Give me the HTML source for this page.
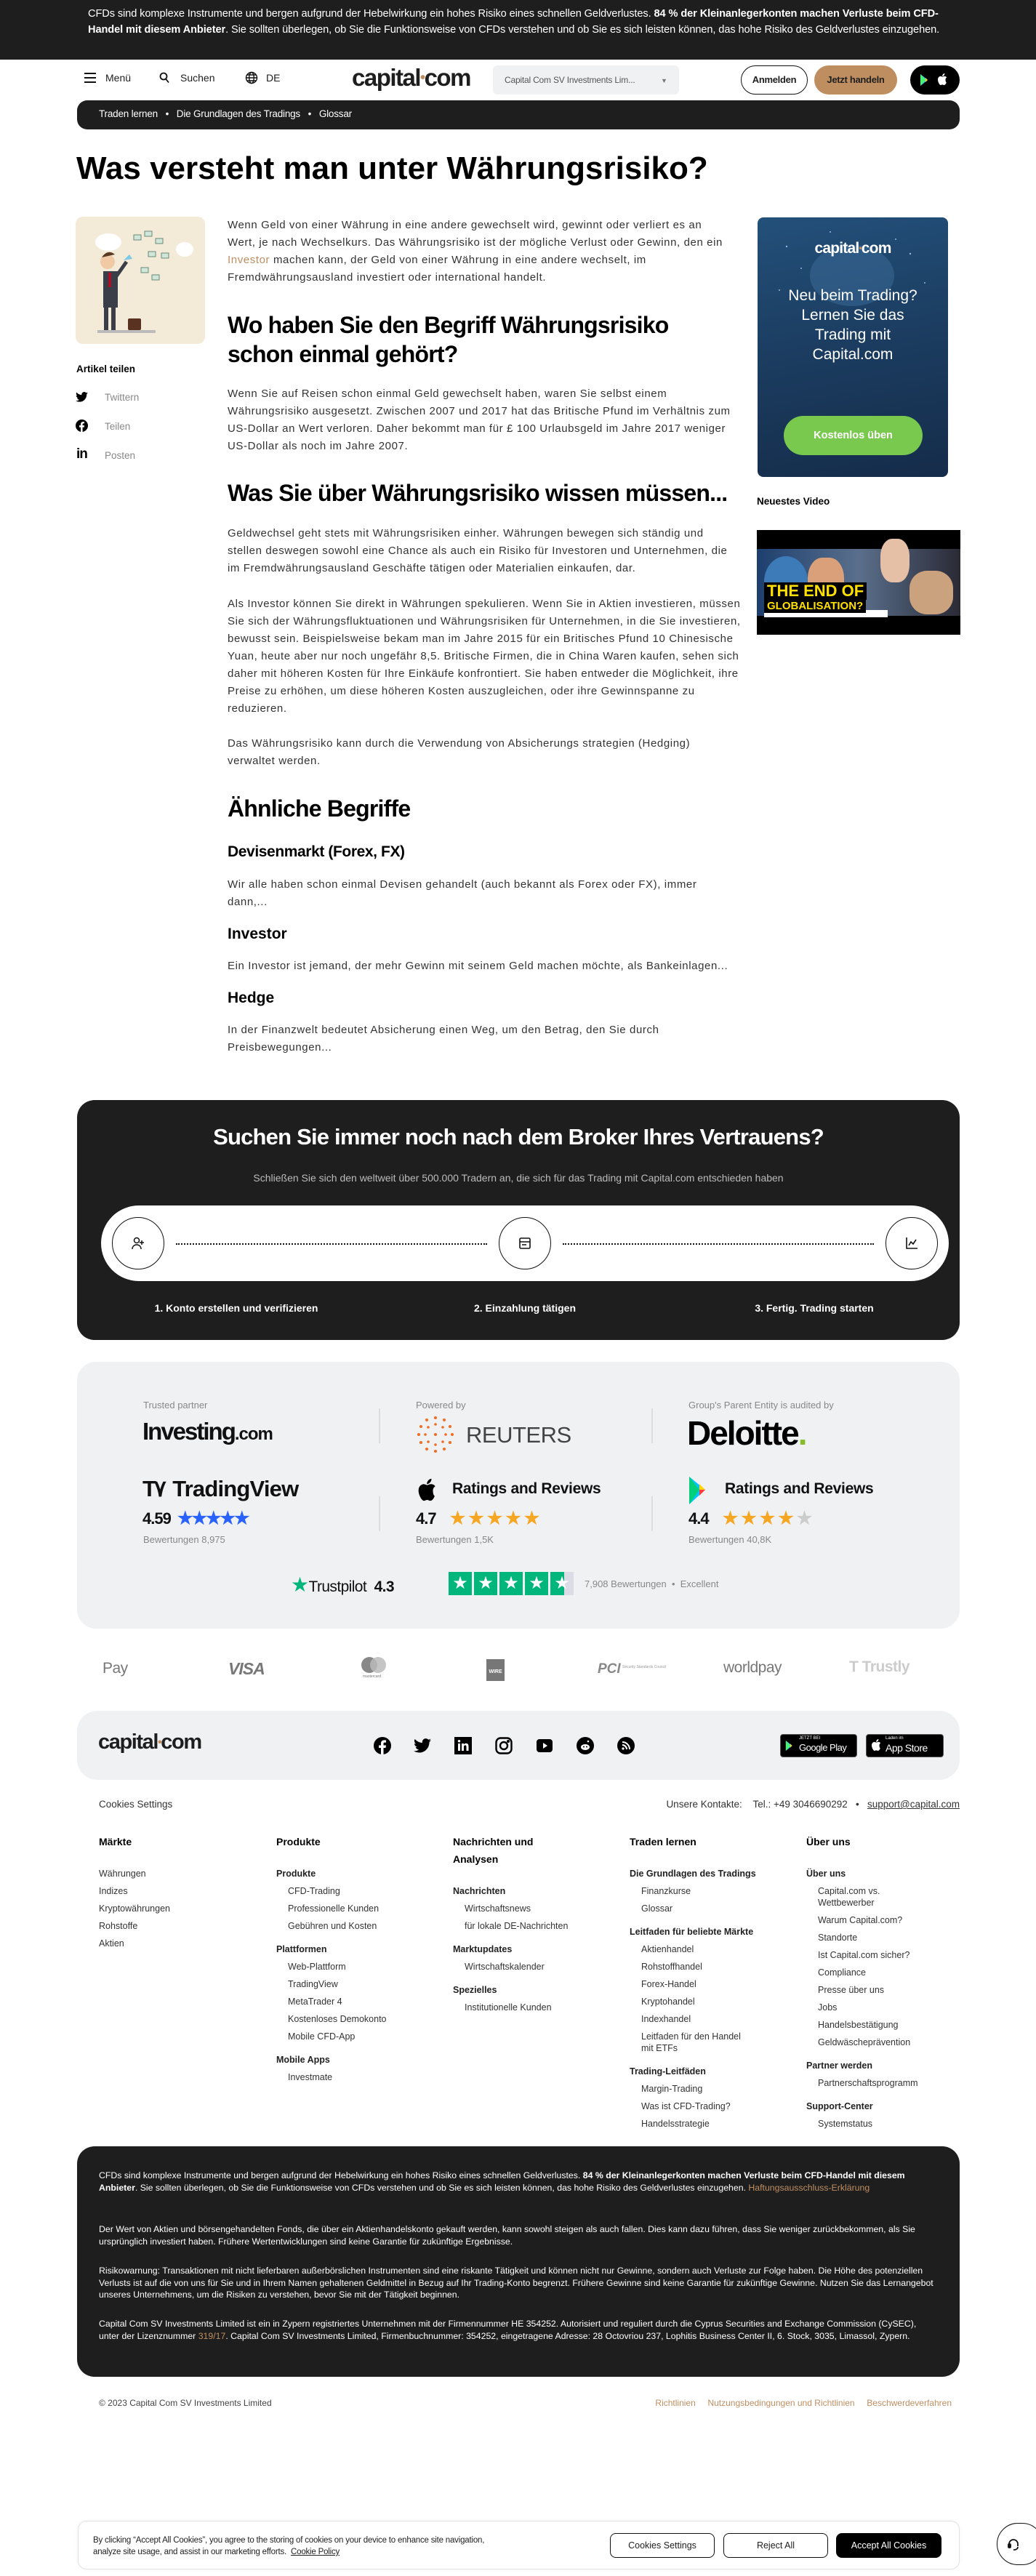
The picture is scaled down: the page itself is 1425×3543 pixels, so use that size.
<!DOCTYPE html>
<html><head><meta charset="utf-8">
<style>
*{margin:0;padding:0;box-sizing:border-box}
body{width:1425px;height:3543px;position:relative;background:#fff;font-family:"Liberation Sans",sans-serif;color:#1e1e1e;overflow:hidden}
.a{position:absolute}
.nw{white-space:nowrap}
.p{font-size:15px;line-height:24px;color:#333;letter-spacing:0.6px}
.h2{font-size:32px;font-weight:bold;letter-spacing:-0.8px;line-height:40px;color:#000}
.fh{font-size:14px;font-weight:bold;color:#000}
.fl{font-size:12.5px;color:#333;line-height:24px}
.fs{font-size:12.5px;font-weight:bold;color:#222;line-height:24px}
.disc{font-size:12.3px;line-height:16.5px;color:#fff;letter-spacing:0}
.star{color:#f5a623}
</style></head><body>

<!-- top risk banner -->
<div class="a" style="left:0;top:0;width:1425px;height:82px;background:#1e1e1e"></div>
<div class="a" style="left:121px;top:8px;width:1180px;font-size:14.6px;line-height:22px;color:#fff;letter-spacing:-0.1px">CFDs sind komplexe Instrumente und bergen aufgrund der Hebelwirkung ein hohes Risiko eines schnellen Geldverlustes. <b>84 % der Kleinanlegerkonten machen Verluste beim CFD-Handel mit diesem Anbieter</b>. Sie sollten überlegen, ob Sie die Funktionsweise von CFDs verstehen und ob Sie es sich leisten können, das hohe Risiko des Geldverlustes einzugehen.</div>

<!-- nav -->
<div class="a" style="left:116px;top:100px;width:16px;height:14px">
<div style="height:2px;background:#111;margin-bottom:4px"></div><div style="height:2px;background:#111;margin-bottom:4px"></div><div style="height:2px;background:#111"></div></div>
<div class="a nw" style="left:145px;top:99px;font-size:14px">Menü</div>
<svg class="a" style="left:219px;top:99px" width="14" height="16" viewBox="0 0 14 16"><circle cx="6" cy="6" r="4.5" fill="none" stroke="#111" stroke-width="1.8"/><path d="M9 9.5l4 5" stroke="#111" stroke-width="1.8"/></svg>
<div class="a nw" style="left:248px;top:99px;font-size:14px">Suchen</div>
<svg class="a" style="left:337px;top:98px" width="18" height="18" viewBox="0 0 18 18" fill="none" stroke="#111" stroke-width="1.4"><circle cx="9" cy="9" r="7.5"/><ellipse cx="9" cy="9" rx="3.3" ry="7.5"/><path d="M1.5 9h15M3 5h12M3 13h12"/></svg>
<div class="a nw" style="left:366px;top:99px;font-size:14px">DE</div>
<div class="a nw" style="left:484px;top:88px;font-size:33px;font-weight:bold;letter-spacing:-1.5px;color:#1e1e1e">capital<span style="color:#bf8e60;font-size:20px;vertical-align:5px">•</span>com</div>
<div class="a" style="left:678px;top:90px;width:256px;height:40px;background:#f0f1f3;border-radius:6px"></div>
<div class="a nw" style="left:694px;top:103px;font-size:12px;color:#555;letter-spacing:-0.2px">Capital Com SV Investments Lim...</div>
<div class="a" style="left:909px;top:106px;font-size:9px;color:#777">▼</div>
<div class="a" style="left:1019px;top:90px;width:92px;height:40px;border:1.5px solid #111;border-radius:20px;font-size:13px;font-weight:bold;text-align:center;line-height:37px;letter-spacing:-0.3px">Anmelden</div>
<div class="a" style="left:1120px;top:90px;width:114px;height:40px;background:#bf8e60;border-radius:20px;font-size:13px;font-weight:bold;text-align:center;line-height:40px;letter-spacing:-0.3px">Jetzt handeln</div>
<div class="a" style="left:1252px;top:90px;width:68px;height:40px;background:#000;border-radius:20px"></div>
<svg class="a" style="left:1265px;top:101px" width="16" height="18" viewBox="0 0 16 18"><path d="M1 1l10 8-10 8z" fill="#3bccff"/><path d="M1 1l7 8-7 8" fill="#48ff48" opacity=".8"/><path d="M11 9l-3-3v6z" fill="#ffd400"/></svg>
<svg class="a" style="left:1289px;top:100px" width="14" height="18" viewBox="0 0 14 18"><path d="M11.5 9.5c0-2 1.6-2.9 1.7-3-1-1.4-2.4-1.6-2.9-1.6-1.2-.1-2.4.7-3 .7s-1.6-.7-2.600-.7C3.3 5 1 6.2 1 9.6c0 3.3 2.4 7.4 3.9 7.4.8 0 1.4-.6 2.4-.6s1.4.6 2.4.6c1.5 0 2.7-2.4 3.1-3.5-.1 0-1.3-.5-1.3-4zM9.5 3.6c.6-.7 1-1.7.9-2.6-.8 0-1.900.6-2.4 1.3-.5.6-1 1.6-.9 2.5.9.1 1.8-.5 2.4-1.2z" fill="#fff"/></svg>

<!-- breadcrumb -->
<div class="a" style="left:106px;top:138px;width:1214px;height:40px;background:#1e1e1e;border-radius:14px"></div>
<div class="a nw" style="left:136px;top:149px;font-size:13.5px;color:#fff;letter-spacing:-0.2px">Traden lernen &nbsp;&nbsp;•&nbsp;&nbsp; Die Grundlagen des Tradings &nbsp;&nbsp;•&nbsp;&nbsp; Glossar</div>

<!-- h1 -->
<div class="a nw" style="left:105px;top:207px;font-size:44px;font-weight:bold;letter-spacing:0;color:#000">Was versteht man unter Währungsrisiko?</div>

<!-- left image -->
<div class="a" style="left:104px;top:298px;width:178px;height:175px;background:#f4ead8;border-radius:10px;overflow:hidden">
<svg width="178" height="175" viewBox="0 0 178 175"><ellipse cx="45" cy="35" rx="18" ry="12" fill="#fff"/><ellipse cx="150" cy="45" rx="12" ry="10" fill="#fff"/>
<g fill="#cfe6d8" stroke="#6a8a7a" stroke-width="1"><rect x="80" y="25" width="10" height="7"/><rect x="95" y="20" width="10" height="7"/><rect x="110" y="30" width="10" height="7"/><rect x="100" y="48" width="10" height="7"/><rect x="118" y="50" width="10" height="7"/><rect x="90" y="70" width="10" height="7"/><rect x="105" y="80" width="10" height="7"/></g>
<rect x="38" y="75" width="20" height="50" fill="#3a3e48"/><circle cx="44" cy="62" r="10" fill="#f2c9a5"/><path d="M36 56q8-12 18-4" fill="#5a3a22"/><path d="M42 125v32M52 125v32" stroke="#3a3e48" stroke-width="6"/><path d="M56 82l14-20" stroke="#3a3e48" stroke-width="5"/><path d="M66 60l8-8 4 6z" fill="#7ec8e8"/><rect x="72" y="140" width="18" height="16" fill="#5a3222" rx="2"/><rect x="30" y="156" width="80" height="4" fill="#bbb"/><path d="M47 77v20" stroke="#d0021b" stroke-width="3"/></svg></div>

<div class="a nw" style="left:105px;top:500px;font-size:13.5px;font-weight:bold;color:#000">Artikel teilen</div>
<svg class="a" style="left:104px;top:539px" width="17" height="14" viewBox="0 0 24 20"><path d="M24 2.4c-.9.4-1.8.7-2.8.8 1-.6 1.8-1.6 2.2-2.7-1 .6-2 1-3.1 1.2A4.9 4.9 0 0 0 11.9 6C7.8 5.8 4.2 3.9 1.7.9c-1.4 2.3-.6 5.2 1.5 6.6-.8 0-1.6-.2-2.2-.6 0 2.4 1.7 4.4 3.9 4.9-.7.2-1.5.2-2.2.1.6 2 2.4 3.4 4.6 3.4A9.9 9.9 0 0 1 0 17.3 14 14 0 0 0 7.5 19.5c9.1 0 14.3-7.7 14-14.6 1-.7 1.8-1.6 2.5-2.5z" fill="#000"/></svg>
<div class="a nw" style="left:144px;top:539px;font-size:13.5px;color:#888">Twittern</div>
<svg class="a" style="left:104px;top:577px" width="17" height="17" viewBox="0 0 24 24"><circle cx="12" cy="12" r="12" fill="#000"/><path d="M13.5 24v-9h3l.5-3.5h-3.5V9.3c0-1 .3-1.7 1.8-1.7H17V4.5c-.3 0-1.4-.1-2.6-.1-2.6 0-4.4 1.6-4.4 4.5v2.6H7V15h3v9z" fill="#fff"/></svg>
<div class="a nw" style="left:144px;top:579px;font-size:13.5px;color:#888">Teilen</div>
<div class="a nw" style="left:105px;top:614px;font-size:19px;font-weight:bold;color:#000;letter-spacing:-1px">in</div>
<div class="a nw" style="left:144px;top:619px;font-size:13.5px;color:#888">Posten</div>

<!-- main article -->
<div class="a p nw" style="left:313px;top:298px">Wenn Geld von einer Währung in eine andere gewechselt wird, gewinnt oder verliert es an<br>Wert, je nach Wechselkurs. Das Währungsrisiko ist der mögliche Verlust oder Gewinn, den ein<br><span style="color:#bf8e60">Investor</span> machen kann, der Geld von einer Währung in eine andere wechselt, im<br>Fremdwährungsausland investiert oder international handelt.</div>
<div class="a h2 nw" style="left:313px;top:427px">Wo haben Sie den Begriff Währungsrisiko<br>schon einmal gehört?</div>
<div class="a p nw" style="left:313px;top:530px">Wenn Sie auf Reisen schon einmal Geld gewechselt haben, waren Sie selbst einem<br>Währungsrisiko ausgesetzt. Zwischen 2007 und 2017 hat das Britische Pfund im Verhältnis zum<br>US-Dollar an Wert verloren. Daher bekommt man für £ 100 Urlaubsgeld im Jahre 2017 weniger<br>US-Dollar als noch im Jahre 2007.</div>
<div class="a h2 nw" style="left:313px;top:658px">Was Sie über Währungsrisiko wissen müssen...</div>
<div class="a p nw" style="left:313px;top:722px">Geldwechsel geht stets mit Währungsrisiken einher. Währungen bewegen sich ständig und<br>stellen deswegen sowohl eine Chance als auch ein Risiko für Investoren und Unternehmen, die<br>im Fremdwährungsausland Geschäfte tätigen oder Materialien einkaufen, dar.</div>
<div class="a p nw" style="left:313px;top:819px">Als Investor können Sie direkt in Währungen spekulieren. Wenn Sie in Aktien investieren, müssen<br>Sie sich der Währungsfluktuationen und Währungsrisiken für Unternehmen, in die Sie investieren,<br>bewusst sein. Beispielsweise bekam man im Jahre 2015 für ein Britisches Pfund 10 Chinesische<br>Yuan, heute aber nur noch ungefähr 8,5. Britische Firmen, die in China Waren kaufen, sehen sich<br>daher mit höheren Kosten für Ihre Einkäufe konfrontiert. Sie haben entweder die Möglichkeit, ihre<br>Preise zu erhöhen, um diese höheren Kosten auszugleichen, oder ihre Gewinnspanne zu<br>reduzieren.</div>
<div class="a p nw" style="left:313px;top:1011px">Das Währungsrisiko kann durch die Verwendung von Absicherungs strategien (Hedging)<br>verwaltet werden.</div>
<div class="a h2 nw" style="left:313px;top:1092px">Ähnliche Begriffe</div>
<div class="a nw" style="left:313px;top:1160px;font-size:21px;font-weight:bold;color:#000;letter-spacing:-0.4px">Devisenmarkt (Forex, FX)</div>
<div class="a p nw" style="left:313px;top:1205px">Wir alle haben schon einmal Devisen gehandelt (auch bekannt als Forex oder FX), immer<br>dann,...</div>
<div class="a nw" style="left:313px;top:1273px;font-size:21px;font-weight:bold;color:#000">Investor</div>
<div class="a p nw" style="left:313px;top:1317px">Ein Investor ist jemand, der mehr Gewinn mit seinem Geld machen möchte, als Bankeinlagen...</div>
<div class="a nw" style="left:313px;top:1361px;font-size:21px;font-weight:bold;color:#000">Hedge</div>
<div class="a p nw" style="left:313px;top:1405px">In der Finanzwelt bedeutet Absicherung einen Weg, um den Betrag, den Sie durch<br>Preisbewegungen...</div>

<!-- right ad -->
<div class="a" style="left:1042px;top:299px;width:262px;height:357px;border-radius:8px;background:linear-gradient(170deg,#23507a 0%,#1c3e62 45%,#152c4a 100%);overflow:hidden">
<svg width="262" height="357" style="position:absolute;left:0;top:0"><ellipse cx="130" cy="80" rx="58" ry="42" fill="#4a7fb0" opacity=".35"/><g fill="#cfe3ff" opacity=".7"><circle cx="40" cy="40" r="1.2"/><circle cx="60" cy="70" r="1"/><circle cx="210" cy="50" r="1.2"/><circle cx="230" cy="90" r="1"/><circle cx="30" cy="100" r="1"/><circle cx="190" cy="30" r="1"/><circle cx="100" cy="20" r="1"/><circle cx="170" cy="110" r="1.3"/></g></svg>
<div class="a nw" style="left:0;width:262px;text-align:center;top:31px;font-size:21px;font-weight:bold;color:#fff;letter-spacing:-0.8px">capital<span style="color:#bf8e60;font-size:12px;vertical-align:3px">•</span>com</div>
<div class="a" style="left:0;width:262px;text-align:center;top:94px;font-size:21px;line-height:27px;color:#fff">Neu beim Trading?<br>Lernen Sie das<br>Trading mit<br>Capital.com</div>
<div class="a" style="left:36px;top:273px;width:191px;height:54px;background:#7ac94f;border-radius:27px;text-align:center;line-height:54px;color:#fff;font-weight:bold;font-size:14.5px">Kostenlos üben</div>
</div>
<div class="a nw" style="left:1041px;top:682px;font-size:13.5px;font-weight:bold;color:#000">Neuestes Video</div>
<div class="a" style="left:1041px;top:729px;width:280px;height:144px;background:#000;overflow:hidden">
<div class="a" style="left:0;top:26px;width:280px;height:92px;background:linear-gradient(90deg,#1d3f6e,#5a6f8c 50%,#2a2a35)"></div>
<div class="a" style="left:10px;top:36px;width:60px;height:70px;border-radius:50%;background:#3c7ab8"></div>
<div class="a" style="left:70px;top:38px;width:50px;height:70px;border-radius:40%;background:#d9a07a"></div>
<div class="a" style="left:170px;top:12px;width:40px;height:60px;border-radius:40%;background:#e6c0a6"></div>
<div class="a" style="left:210px;top:56px;width:60px;height:60px;border-radius:40%;background:#caa27e"></div>
<div class="a" style="left:10px;top:110px;width:170px;height:10px;background:#fff"></div>
<div class="a nw" style="left:10px;top:72px;font-size:22px;font-weight:bold;color:#ffe000;background:#000;padding:0 4px;line-height:24px">THE END OF</div>
<div class="a nw" style="left:10px;top:96px;font-size:15px;font-weight:bold;color:#ffe000;background:#000;padding:0 4px;line-height:18px">GLOBALISATION?</div>
</div>

<!-- CTA dark -->
<div class="a" style="left:106px;top:1513px;width:1214px;height:330px;background:#1e1e1e;border-radius:24px"></div>
<div class="a nw" style="left:106px;width:1214px;text-align:center;top:1546px;font-size:31px;font-weight:bold;color:#fff;letter-spacing:-0.8px">Suchen Sie immer noch nach dem Broker Ihres Vertrauens?</div>
<div class="a nw" style="left:106px;width:1214px;text-align:center;top:1612px;font-size:14px;color:#bbb">Schließen Sie sich den weltweit über 500.000 Tradern an, die sich für das Trading mit Capital.com entschieden haben</div>
<div class="a" style="left:139px;top:1658px;width:1166px;height:104px;background:#fff;border-radius:52px"></div>
<div class="a" style="left:154px;top:1674px;width:72px;height:72px;border:1.5px solid #111;border-radius:50%"></div>
<div class="a" style="left:686px;top:1674px;width:72px;height:72px;border:1.5px solid #111;border-radius:50%"></div>
<div class="a" style="left:1218px;top:1674px;width:72px;height:72px;border:1.5px solid #111;border-radius:50%"></div>
<div class="a" style="left:242px;top:1710px;width:428px;border-top:2px dotted #111"></div>
<div class="a" style="left:774px;top:1710px;width:428px;border-top:2px dotted #111"></div>
<svg class="a" style="left:180px;top:1700px" width="20" height="20" viewBox="0 0 20 20" fill="none" stroke="#111" stroke-width="1.5"><circle cx="8" cy="6" r="3.5"/><path d="M2 18c0-4 3-6 6-6s6 2 6 6M15 6v6M12 9h6"/></svg>
<svg class="a" style="left:712px;top:1700px" width="20" height="20" viewBox="0 0 20 20" fill="none" stroke="#111" stroke-width="1.6"><rect x="3" y="3" width="14" height="14" rx="1.5"/><path d="M3 8h14M6 12h6"/></svg>
<svg class="a" style="left:1244px;top:1700px" width="20" height="20" viewBox="0 0 20 20" fill="none" stroke="#111" stroke-width="1.6"><path d="M3 2v15h15M6 13l3-5 3 3 4-6"/></svg>
<div class="a nw" style="left:160px;width:330px;text-align:center;top:1791px;font-size:14px;font-weight:bold;color:#fff">1. Konto erstellen und verifizieren</div>
<div class="a nw" style="left:557px;width:330px;text-align:center;top:1791px;font-size:14px;font-weight:bold;color:#fff">2. Einzahlung tätigen</div>
<div class="a nw" style="left:955px;width:330px;text-align:center;top:1791px;font-size:14px;font-weight:bold;color:#fff">3. Fertig. Trading starten</div>

<!-- partners -->
<div class="a" style="left:106px;top:1873px;width:1214px;height:367px;background:#f0f1f3;border-radius:26px"></div>
<div class="a" style="left:521px;top:1937px;width:2px;height:48px;background:#ddd"></div>
<div class="a" style="left:896px;top:1937px;width:2px;height:48px;background:#ddd"></div>
<div class="a" style="left:521px;top:2058px;width:2px;height:48px;background:#ddd"></div>
<div class="a" style="left:896px;top:2058px;width:2px;height:48px;background:#ddd"></div>
<div class="a nw" style="left:197px;top:1925px;font-size:13px;color:#888">Trusted partner</div>
<div class="a nw" style="left:572px;top:1925px;font-size:13px;color:#888">Powered by</div>
<div class="a nw" style="left:947px;top:1925px;font-size:13px;color:#888">Group's Parent Entity is audited by</div>
<div class="a nw" style="left:196px;top:1950px;font-size:33px;font-weight:bold;letter-spacing:-2px;color:#111">Investing<span style="font-size:24px;letter-spacing:-1px">.com</span></div>
<svg class="a" style="left:572px;top:1946px" width="58" height="54" viewBox="0 0 58 54"><g fill="#f26b21"><circle cx="27" cy="27" r="2"/>
<circle cx="27" cy="4" r="2"/><circle cx="39" cy="7" r="2"/><circle cx="47" cy="16" r="2"/><circle cx="50" cy="27" r="2"/><circle cx="47" cy="38" r="2"/><circle cx="39" cy="47" r="2"/><circle cx="27" cy="50" r="2"/><circle cx="15" cy="47" r="2"/><circle cx="7" cy="38" r="2"/><circle cx="4" cy="27" r="2"/><circle cx="7" cy="16" r="2"/><circle cx="15" cy="7" r="2"/>
<circle cx="27" cy="13" r="1.8"/><circle cx="37" cy="17" r="1.8"/><circle cx="41" cy="27" r="1.8"/><circle cx="37" cy="37" r="1.8"/><circle cx="27" cy="41" r="1.8"/><circle cx="17" cy="37" r="1.8"/><circle cx="13" cy="27" r="1.8"/><circle cx="17" cy="17" r="1.8"/></g></svg>
<div class="a nw" style="left:641px;top:1956px;font-size:31px;color:#444;letter-spacing:-0.5px">REUTERS</div>
<div class="a nw" style="left:945px;top:1944px;font-size:46px;font-weight:bold;color:#000;letter-spacing:-2px">Deloitte<span style="color:#86bc25">.</span></div>
<div class="a nw" style="left:196px;top:2030px;font-size:31px;font-weight:bold;color:#111;letter-spacing:-0.8px"><span style="letter-spacing:-3px">T٧</span> TradingView</div>
<svg class="a" style="left:572px;top:2032px" width="30" height="34" viewBox="0 0 14 18"><path d="M11.5 9.5c0-2 1.6-2.9 1.7-3-1-1.4-2.4-1.6-2.9-1.6-1.2-.1-2.4.7-3 .7s-1.6-.7-2.6-.7C3.3 5 1 6.2 1 9.6c0 3.3 2.4 7.4 3.9 7.4.8 0 1.4-.6 2.4-.6s1.4.6 2.4.6c1.5 0 2.7-2.4 3.1-3.5-.1 0-1.3-.5-1.3-4zM9.5 3.6c.6-.7 1-1.7.9-2.6-.8 0-1.9.6-2.4 1.3-.5.6-1 1.6-.9 2.5.9.1 1.8-.5 2.4-1.2z" fill="#000"/></svg>
<div class="a nw" style="left:622px;top:2036px;font-size:21px;font-weight:bold;color:#111;letter-spacing:-0.3px">Ratings and Reviews</div>
<svg class="a" style="left:947px;top:2030px" width="24" height="40" viewBox="0 0 24 40"><path d="M1 1l22 18L1 39z" fill="#00c3ff"/><path d="M1 1l14 18L1 39z" fill="#00d07a"/><path d="M15 19l8 0-8 8z" fill="#ff3a44"/><path d="M15 19l8 0-8-8z" fill="#ffd400"/></svg>
<div class="a nw" style="left:997px;top:2036px;font-size:21px;font-weight:bold;color:#111;letter-spacing:-0.3px">Ratings and Reviews</div>
<div class="a nw" style="left:196px;top:2074px;font-size:22px;font-weight:bold;color:#111;letter-spacing:-1px">4.59 <span style="color:#2962ff;font-size:24px;letter-spacing:-2px;margin-left:4px">★★★★★</span></div>
<div class="a nw" style="left:572px;top:2074px;font-size:22px;font-weight:bold;color:#111;letter-spacing:-1px">4.7 <span class="star" style="font-size:24px;letter-spacing:4px;margin-left:14px">★★★★★</span></div>
<div class="a nw" style="left:947px;top:2074px;font-size:22px;font-weight:bold;color:#111;letter-spacing:-1px">4.4 <span class="star" style="font-size:24px;letter-spacing:4px;margin-left:14px">★★★★<span style="color:#ccc">★</span></span></div>
<div class="a nw" style="left:197px;top:2110px;font-size:13px;color:#888">Bewertungen 8,975</div>
<div class="a nw" style="left:572px;top:2110px;font-size:13px;color:#888">Bewertungen 1,5K</div>
<div class="a nw" style="left:947px;top:2110px;font-size:13px;color:#888">Bewertungen 40,8K</div>
<div class="a nw" style="left:400px;top:2163px;font-size:21px;color:#111;letter-spacing:-0.6px"><span style="color:#00b67a;font-size:28px">★</span>Trustpilot &nbsp;<b>4.3</b></div>
<div class="a" style="left:617px;top:2162px;display:flex;gap:3px">
<div style="width:32px;height:32px;background:#00b67a;color:#fff;text-align:center;font-size:24px;line-height:32px">★</div><div style="width:32px;height:32px;background:#00b67a;color:#fff;text-align:center;font-size:24px;line-height:32px">★</div><div style="width:32px;height:32px;background:#00b67a;color:#fff;text-align:center;font-size:24px;line-height:32px">★</div><div style="width:32px;height:32px;background:#00b67a;color:#fff;text-align:center;font-size:24px;line-height:32px">★</div><div style="width:32px;height:32px;background:linear-gradient(90deg,#00b67a 60%,#dcdce6 60%);color:#fff;text-align:center;font-size:24px;line-height:32px">★</div></div>
<div class="a nw" style="left:804px;top:2171px;font-size:13px;color:#888">7,908 Bewertungen &nbsp;•&nbsp; Excellent</div>

<!-- payments -->
<div class="a nw" style="left:141px;top:2283px;font-size:21px;color:#777;letter-spacing:-0.5px"> Pay</div>
<div class="a nw" style="left:314px;top:2282px;font-size:23px;font-weight:bold;font-style:italic;color:#777;letter-spacing:-1px">VISA</div>
<div class="a" style="left:497px;top:2279px;width:22px;height:22px;border-radius:50%;background:#888"></div>
<div class="a" style="left:509px;top:2279px;width:22px;height:22px;border-radius:50%;background:#bbb;opacity:.85"></div>
<div class="a nw" style="left:499px;top:2303px;font-size:5px;color:#777">mastercard</div>
<div class="a" style="left:669px;top:2282px;width:25px;height:30px;background:#777;color:#fff;font-size:7px;font-weight:bold;text-align:center;padding-top:14px">WIRE</div>
<div class="a nw" style="left:822px;top:2285px;font-size:19px;font-weight:bold;font-style:italic;color:#888">PCI</div>
<div class="a nw" style="left:856px;top:2290px;font-size:5px;color:#999">Security Standards Council</div>
<div class="a nw" style="left:995px;top:2282px;font-size:21px;color:#777;letter-spacing:-0.5px">worldpay</div>
<div class="a nw" style="left:1168px;top:2281px;font-size:21px;font-weight:bold;color:#ccc;letter-spacing:-0.5px">T Trustly</div>

<!-- footer bar -->
<div class="a" style="left:106px;top:2353px;width:1214px;height:95px;background:#f0f1f3;border-radius:28px"></div>
<div class="a nw" style="left:135px;top:2380px;font-size:29px;font-weight:bold;letter-spacing:-1.4px;color:#1e1e1e">capital<span style="color:#bf8e60;font-size:16px;vertical-align:4px">•</span>com</div>
<svg class="a" style="left:514px;top:2389px" width="24" height="24" viewBox="0 0 24 24"><circle cx="12" cy="12" r="12" fill="#000"/><path d="M13.5 24v-9h3l.5-3.5h-3.5V9.3c0-1 .3-1.7 1.8-1.7H17V4.5c-.3 0-1.4-.1-2.6-.1-2.6 0-4.4 1.6-4.4 4.5v2.6H7V15h3v9z" fill="#fff"/></svg>
<svg class="a" style="left:569px;top:2391px" width="24" height="20" viewBox="0 0 24 20"><path d="M24 2.4c-.9.4-1.8.7-2.8.8 1-.6 1.8-1.6 2.2-2.7-1 .6-2 1-3.1 1.2A4.9 4.9 0 0 0 11.9 6C7.8 5.8 4.2 3.9 1.7.9c-1.4 2.3-.6 5.2 1.5 6.6-.8 0-1.6-.2-2.2-.6 0 2.4 1.7 4.4 3.9 4.9-.7.2-1.5.2-2.2.1.6 2 2.4 3.4 4.6 3.4A9.9 9.9 0 0 1 0 17.3 14 14 0 0 0 7.5 19.5c9.1 0 14.3-7.7 14-14.6 1-.7 1.8-1.6 2.5-2.5z" fill="#000"/></svg>
<svg class="a" style="left:625px;top:2389px" width="24" height="24" viewBox="0 0 24 24"><rect width="24" height="24" fill="#000"/><path d="M5 9h3v10H5zM6.5 4a1.7 1.7 0 1 1 0 3.4 1.7 1.7 0 0 1 0-3.4zM10 9h3v1.4c.5-.9 1.6-1.6 3-1.6 3 0 3.5 2 3.5 4.6V19h-3v-5c0-1.2 0-2.6-1.6-2.6S13 12.6 13 13.9V19h-3z" fill="#fff"/></svg>
<svg class="a" style="left:681px;top:2389px" width="24" height="24" viewBox="0 0 24 24" fill="none" stroke="#000" stroke-width="2.4"><rect x="1.5" y="1.5" width="21" height="21" rx="6"/><circle cx="12" cy="12" r="5"/><circle cx="18" cy="6" r=".8" fill="#000"/></svg>
<svg class="a" style="left:737px;top:2389px" width="24" height="24" viewBox="0 0 24 24"><rect x="1" y="3" width="22" height="18" rx="4" fill="#000"/><path d="M10 8v8l6-4z" fill="#fff"/></svg>
<svg class="a" style="left:793px;top:2389px" width="24" height="24" viewBox="0 0 24 24"><circle cx="12" cy="12" r="12" fill="#000"/><ellipse cx="12" cy="14" rx="6" ry="4" fill="#fff"/><circle cx="10" cy="13.5" r="1" fill="#000"/><circle cx="14" cy="13.5" r="1" fill="#000"/><circle cx="16" cy="6" r="1.3" fill="#fff"/></svg>
<svg class="a" style="left:849px;top:2389px" width="24" height="24" viewBox="0 0 24 24"><circle cx="12" cy="12" r="12" fill="#000"/><circle cx="8" cy="16" r="1.6" fill="#fff"/><path d="M7 11a6 6 0 0 1 6 6M7 7a10 10 0 0 1 10 10" stroke="#fff" stroke-width="2" fill="none"/></svg>
<div class="a" style="left:1073px;top:2385px;width:106px;height:32px;background:#000;border-radius:4px;border:1px solid #555"></div>
<svg class="a" style="left:1080px;top:2392px" width="14" height="18" viewBox="0 0 16 18"><path d="M1 1l10 8-10 8z" fill="#3bccff"/><path d="M1 1l7 8-7 8" fill="#48ff48" opacity=".8"/><path d="M11 9l-3-3v6z" fill="#ffd400"/></svg>
<div class="a nw" style="left:1099px;top:2388px;font-size:6px;color:#fff">JETZT BEI</div>
<div class="a nw" style="left:1099px;top:2396px;font-size:13px;color:#fff;letter-spacing:-0.5px">Google Play</div>
<div class="a" style="left:1191px;top:2385px;width:107px;height:32px;background:#000;border-radius:4px;border:1px solid #555"></div>
<svg class="a" style="left:1198px;top:2391px" width="14" height="18" viewBox="0 0 14 18"><path d="M11.5 9.5c0-2 1.6-2.9 1.7-3-1-1.4-2.4-1.6-2.9-1.6-1.2-.1-2.4.7-3 .7s-1.6-.7-2.6-.7C3.3 5 1 6.2 1 9.6c0 3.3 2.4 7.4 3.9 7.4.8 0 1.4-.6 2.4-.6s1.4.6 2.4.6c1.5 0 2.7-2.4 3.1-3.5-.1 0-1.3-.5-1.3-4zM9.5 3.6c.6-.7 1-1.7.9-2.6-.8 0-1.9.6-2.4 1.3-.5.6-1 1.6-.9 2.5.9.1 1.8-.5 2.4-1.2z" fill="#fff"/></svg>
<div class="a nw" style="left:1218px;top:2388px;font-size:6px;color:#fff">Laden im</div>
<div class="a nw" style="left:1218px;top:2396px;font-size:14px;color:#fff;letter-spacing:-0.5px">App Store</div>

<div class="a nw" style="left:136px;top:2474px;font-size:13.5px;color:#333">Cookies Settings</div>
<div class="a nw" style="right:105px;top:2474px;font-size:13.5px;color:#333">Unsere Kontakte: &nbsp;&nbsp; Tel.: +49 3046690292 &nbsp;&nbsp;•&nbsp;&nbsp; <u>support@capital.com</u></div>

<!-- footer columns -->
<div class="a" style="left:136px;top:2521px;width:200px">
<div class="fh" style="line-height:24px">Märkte</div><div style="height:20px"></div>
<div class="fl">Währungen</div><div class="fl">Indizes</div><div class="fl">Kryptowährungen</div><div class="fl">Rohstoffe</div><div class="fl">Aktien</div></div>

<div class="a" style="left:380px;top:2521px;width:220px">
<div class="fh" style="line-height:24px">Produkte</div><div style="height:20px"></div>
<div class="fs">Produkte</div><div style="padding-left:16px"><div class="fl">CFD-Trading</div><div class="fl">Professionelle Kunden</div><div class="fl">Gebühren und Kosten</div></div>
<div style="height:8px"></div><div class="fs">Plattformen</div><div style="padding-left:16px"><div class="fl">Web-Plattform</div><div class="fl">TradingView</div><div class="fl">MetaTrader 4</div><div class="fl">Kostenloses Demokonto</div><div class="fl">Mobile CFD-App</div></div>
<div style="height:8px"></div><div class="fs">Mobile Apps</div><div style="padding-left:16px"><div class="fl">Investmate</div></div></div>

<div class="a" style="left:623px;top:2521px;width:220px">
<div class="fh" style="line-height:24px">Nachrichten und<br>Analysen</div><div style="height:20px"></div>
<div class="fs">Nachrichten</div><div style="padding-left:16px"><div class="fl">Wirtschaftsnews</div><div class="fl">für lokale DE-Nachrichten</div></div>
<div style="height:8px"></div><div class="fs">Marktupdates</div><div style="padding-left:16px"><div class="fl">Wirtschaftskalender</div></div>
<div style="height:8px"></div><div class="fs">Spezielles</div><div style="padding-left:16px"><div class="fl">Institutionelle Kunden</div></div></div>

<div class="a" style="left:866px;top:2521px;width:230px">
<div class="fh" style="line-height:24px">Traden lernen</div><div style="height:20px"></div>
<div class="fs">Die Grundlagen des Tradings</div><div style="padding-left:16px"><div class="fl">Finanzkurse</div><div class="fl">Glossar</div></div>
<div style="height:8px"></div><div class="fs">Leitfaden für beliebte Märkte</div><div style="padding-left:16px"><div class="fl">Aktienhandel</div><div class="fl">Rohstoffhandel</div><div class="fl">Forex-Handel</div><div class="fl">Kryptohandel</div><div class="fl">Indexhandel</div><div class="fl" style="line-height:16px;padding:4px 0">Leitfaden für den Handel<br>mit ETFs</div></div>
<div style="height:8px"></div><div class="fs">Trading-Leitfäden</div><div style="padding-left:16px"><div class="fl">Margin-Trading</div><div class="fl">Was ist CFD-Trading?</div><div class="fl">Handelsstrategie</div></div></div>

<div class="a" style="left:1109px;top:2521px;width:220px">
<div class="fh" style="line-height:24px">Über uns</div><div style="height:20px"></div>
<div class="fs">Über uns</div><div style="padding-left:16px"><div class="fl" style="line-height:16px;padding:4px 0">Capital.com vs.<br>Wettbewerber</div><div class="fl">Warum Capital.com?</div><div class="fl">Standorte</div><div class="fl">Ist Capital.com sicher?</div><div class="fl">Compliance</div><div class="fl">Presse über uns</div><div class="fl">Jobs</div><div class="fl">Handelsbestätigung</div><div class="fl">Geldwäscheprävention</div></div>
<div style="height:8px"></div><div class="fs">Partner werden</div><div style="padding-left:16px"><div class="fl">Partnerschaftsprogramm</div></div>
<div style="height:8px"></div><div class="fs">Support-Center</div><div style="padding-left:16px"><div class="fl">Systemstatus</div></div></div>

<!-- disclaimer -->
<div class="a" style="left:106px;top:2952px;width:1214px;height:317px;background:#1e1e1e;border-radius:24px"></div>
<div class="a disc" style="left:136px;top:2984px;width:1150px">CFDs sind komplexe Instrumente und bergen aufgrund der Hebelwirkung ein hohes Risiko eines schnellen Geldverlustes. <b>84 % der Kleinanlegerkonten machen Verluste beim CFD-Handel mit diesem Anbieter</b>. Sie sollten überlegen, ob Sie die Funktionsweise von CFDs verstehen und ob Sie es sich leisten können, das hohe Risiko des Geldverlustes einzugehen. <span style="color:#bf8e60">Haftungsausschluss-Erklärung</span></div>
<div class="a disc" style="left:136px;top:3058px;width:1150px">Der Wert von Aktien und börsengehandelten Fonds, die über ein Aktienhandelskonto gekauft werden, kann sowohl steigen als auch fallen. Dies kann dazu führen, dass Sie weniger zurückbekommen, als Sie ursprünglich investiert haben. Frühere Wertentwicklungen sind keine Garantie für zukünftige Ergebnisse.</div>
<div class="a disc" style="left:136px;top:3115px;width:1150px">Risikowarnung: Transaktionen mit nicht lieferbaren außerbörslichen Instrumenten sind eine riskante Tätigkeit und können nicht nur Gewinne, sondern auch Verluste zur Folge haben. Die Höhe des potenziellen Verlusts ist auf die von uns für Sie und in Ihrem Namen gehaltenen Geldmittel in Bezug auf Ihr Trading-Konto begrenzt. Frühere Gewinne sind keine Garantie für zukünftige Gewinne. Nutzen Sie das Lernangebot unseres Unternehmens, um die Risiken zu verstehen, bevor Sie mit der Tätigkeit beginnen.</div>
<div class="a disc" style="left:136px;top:3188px;width:1150px">Capital Com SV Investments Limited ist ein in Zypern registriertes Unternehmen mit der Firmennummer HE 354252. Autorisiert und reguliert durch die Cyprus Securities and Exchange Commission (CySEC), unter der Lizenznummer <span style="color:#bf8e60">319/17</span>. Capital Com SV Investments Limited, Firmenbuchnummer: 354252, eingetragene Adresse: 28 Octovriou 237, Lophitis Business Center II, 6. Stock, 3035, Limassol, Zypern.</div>

<div class="a nw" style="left:136px;top:3298px;font-size:12px;color:#444">© 2023 Capital Com SV Investments Limited</div>
<div class="a nw" style="right:116px;top:3298px;font-size:12px;color:#bf8e60">Richtlinien &nbsp;&nbsp;&nbsp; Nutzungsbedingungen und Richtlinien &nbsp;&nbsp;&nbsp; Beschwerdeverfahren</div>

<!-- cookie banner -->
<div class="a" style="left:107px;top:3467px;width:1213px;height:67px;background:#fff;border:1px solid #e2e2e2;border-radius:12px;box-shadow:0 0 6px rgba(0,0,0,.05)"></div>
<div class="a" style="left:128px;top:3486px;font-size:11.5px;line-height:16px;color:#222;letter-spacing:-0.2px">By clicking “Accept All Cookies”, you agree to the storing of cookies on your device to enhance site navigation,<br>analyze site usage, and assist in our marketing efforts. &nbsp;<u>Cookie Policy</u></div>
<div class="a" style="left:839px;top:3484px;width:144px;height:34px;border:1px solid #111;border-radius:8px;text-align:center;line-height:32px;font-size:12.5px">Cookies Settings</div>
<div class="a" style="left:995px;top:3484px;width:144px;height:34px;border:1px solid #111;border-radius:8px;text-align:center;line-height:32px;font-size:12.5px">Reject All</div>
<div class="a" style="left:1150px;top:3484px;width:145px;height:34px;background:#000;border-radius:8px;text-align:center;line-height:34px;font-size:12.5px;color:#fff">Accept All Cookies</div>
<div class="a" style="left:1371px;top:3470px;width:64px;height:58px;border:1px solid #111;border-radius:29px;background:#fff"></div>
<svg class="a" style="left:1386px;top:3490px" width="16" height="18" viewBox="0 0 16 18" fill="none" stroke="#111" stroke-width="1.8"><path d="M2 9a6 6 0 0 1 12 0v3M2 9v3"/><rect x="1" y="9" width="3" height="5" rx="1" fill="#111"/><path d="M14 13c0 3-3 4-6 4"/></svg>

</body></html>
